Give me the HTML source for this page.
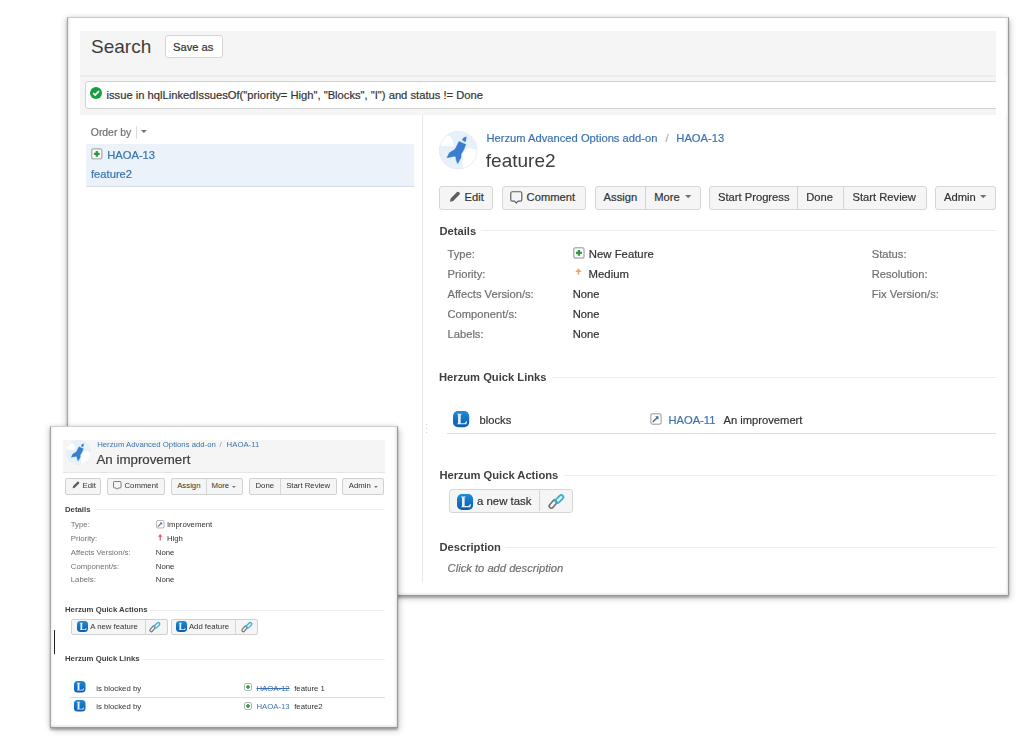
<!DOCTYPE html>
<html><head><meta charset="utf-8"><style>
html,body{margin:0;padding:0;background:#fff;}
body{width:1028px;height:742px;position:relative;overflow:hidden;font-family:"Liberation Sans",sans-serif;}
#w{position:absolute;left:0;top:0;width:1028px;height:742px;filter:blur(0.5px);}
.a{position:absolute;}
.t{position:absolute;white-space:nowrap;}
svg.a{overflow:visible;}
</style></head><body><div id="w">
<div class="a" style="left:67px;top:17px;width:940px;height:577px;background:#fff;border:1px solid #999;border-left-color:#a6a6a6;border-top-color:#c8c8c8;box-shadow:0 2px 2px rgba(0,0,0,0.22), 2px 3px 6px rgba(0,0,0,0.16), -2px 0 6px rgba(0,0,0,0.13), inset 3px 0 3px -2px rgba(0,0,0,0.10), inset -3px -3px 3px -2px rgba(0,0,0,0.12);"></div>
<div class="a" style="left:80.00px;top:31.00px;width:916.00px;height:84.00px;background:#f5f5f5;"></div>
<div class="a" style="left:80.00px;top:75.00px;width:916.00px;height:2.00px;background:#eeeeee;"></div>
<div class="a" style="left:85.00px;top:81.00px;width:915.00px;height:27.60px;background:#fff;border:1px solid #d2d2d2;border-radius:3px;box-sizing:border-box;"></div>
<div class="a" style="left:996.00px;top:76.00px;width:11.00px;height:39.00px;background:#fff;"></div>
<div class="t" style="left:91.00px;top:36.72px;font-size:19px;line-height:19px;color:#3d3d3d;font-weight:normal;font-style:normal;">Search</div>
<div class="a" style="left:164.50px;top:35.30px;width:58.00px;height:23.10px;background:#fff;border:1px solid #d5d5d5;border-radius:3px;box-sizing:border-box;"></div>
<div class="t" style="left:173.00px;top:41.92px;font-size:11.2px;line-height:11.2px;color:#333333;font-weight:normal;font-style:normal;-webkit-text-stroke:0.2px currentColor;">Save as</div>
<svg class="a" style="left:90.20px;top:86.80px" width="12" height="12" viewBox="0 0 12 12"><circle cx="6" cy="6" r="6" fill="#14a03c"/><path d="M3.2 6.2L5.2 8.1L8.9 4.2" fill="none" stroke="#fff" stroke-width="1.8"/></svg>
<div class="t" style="left:106.50px;top:90.32px;font-size:11.2px;line-height:11.2px;color:#333333;font-weight:normal;font-style:normal;-webkit-text-stroke:0.2px currentColor;">issue in hqlLinkedIssuesOf("priority= High", "Blocks", "I") and status != Done</div>
<div class="a" style="left:421.80px;top:115.00px;width:1.00px;height:468.00px;background:#e9e9e9;"></div>
<div class="t" style="left:90.80px;top:128.10px;font-size:10.4px;line-height:10.4px;color:#707070;font-weight:normal;font-style:normal;-webkit-text-stroke:0.2px currentColor;">Order by</div>
<div class="a" style="left:136.30px;top:126.00px;width:1.00px;height:13.00px;background:#dcdcdc;"></div>
<svg class="a" style="left:140.90px;top:130.15px" width="5.8" height="2.9" viewBox="0 0 5.8 2.9"><path d="M0 0H5.8L2.9 2.9Z" fill="#707070"/></svg>
<div class="a" style="left:86.40px;top:143.50px;width:327.60px;height:43.00px;background:#ebf2f9;border-bottom:1px solid #d8dde3;box-sizing:border-box;"></div>
<svg class="a" style="left:91.20px;top:148.00px" width="11.6" height="11.6" viewBox="0 0 11.6 11.6"><rect x="0.725" y="0.725" width="10.15" height="10.15" rx="2.126666666666667" fill="#fff" stroke="#b5b5b5" stroke-width="1.45"/><path d="M5.8 2.9V8.7M2.9 5.8H8.7" stroke="#2c9a43" stroke-width="2.32"/></svg>
<div class="t" style="left:107.20px;top:149.52px;font-size:11.2px;line-height:11.2px;color:#3b73af;font-weight:normal;font-style:normal;-webkit-text-stroke:0.2px currentColor;">HAOA-13</div>
<div class="t" style="left:91.00px;top:169.12px;font-size:11.2px;line-height:11.2px;color:#3b73af;font-weight:normal;font-style:normal;-webkit-text-stroke:0.2px currentColor;">feature2</div>
<svg class="a" style="left:439.00px;top:130.50px" width="38.6" height="38.6" viewBox="0 0 38.6 38.6"><defs><clipPath id="cl18"><circle cx="19.3" cy="19.3" r="19.3"/></clipPath></defs><g clip-path="url(#cl18)"><rect width="38.6" height="38.6" fill="#e8f0fa"/><path d="M-0.9650000000000001 15.054H14.475000000000001Q15.054 8.685 10.615 5.3075Q6.755000000000001 2.8950000000000005 1.9300000000000002 5.790000000000001L-0.9650000000000001 8.685Z" fill="#ffffff"/><path d="M23.642500000000002 39.565000000000005V25.090000000000003Q23.642500000000002 17.37 30.880000000000003 17.2735Q35.705000000000005 17.37 39.565000000000005 20.265V39.565000000000005Z" fill="#ffffff"/><circle cx="19.3" cy="19.3" r="18.817500000000003" fill="none" stroke="#e6ebf1" stroke-width="0.9650000000000001"/><polygon points="22.97,9.07 24.61,6.47 27.60,5.50 27.21,8.59 26.44,11.19" fill="#3a7fcf"/><polygon points="20.07,10.42 26.73,13.51 24.61,18.91 22.00,23.16 22.00,26.54 18.72,32.62 17.27,29.34 16.79,25.57 14.96,25.28 8.11,26.73 10.42,21.81 13.03,20.17 16.12,18.24" fill="#3a7fcf" stroke="#3a7fcf" stroke-width="0.5790000000000001" stroke-linejoin="round"/></g></svg>
<div class="t" style="left:486.40px;top:133.22px;font-size:11.2px;line-height:11.2px;color:#3b73af;font-weight:normal;font-style:normal;-webkit-text-stroke:0.2px currentColor;">Herzum Advanced Options add-on</div>
<div class="t" style="left:665.50px;top:133.22px;font-size:11.2px;line-height:11.2px;color:#aaa;font-weight:normal;font-style:normal;-webkit-text-stroke:0.2px currentColor;">/</div>
<div class="t" style="left:676.30px;top:133.22px;font-size:11.2px;line-height:11.2px;color:#3b73af;font-weight:normal;font-style:normal;-webkit-text-stroke:0.2px currentColor;">HAOA-13</div>
<div class="t" style="left:485.80px;top:150.62px;font-size:19px;line-height:19px;color:#3d3d3d;font-weight:normal;font-style:normal;">feature2</div>
<div class="a" style="left:439.30px;top:186.00px;width:53.30px;height:24.20px;background:#f5f5f5;border:1px solid #d6d6d6;border-radius:3px;box-sizing:border-box;"></div>
<svg class="a" style="left:448.80px;top:190.80px" width="11.6" height="11.6" viewBox="0 0 11.6 11.6"><path d="M0.87 10.73L1.6433333333333333 7.443333333333333L8.023333333333333 1.0633333333333335Q8.893333333333333 0.19333333333333336 9.763333333333334 1.0633333333333335L10.536666666666667 1.8366666666666667Q11.406666666666668 2.7066666666666666 10.536666666666667 3.5766666666666667L4.156666666666666 9.956666666666667Z" fill="#5e5e5e"/></svg>
<div class="t" style="left:464.60px;top:192.12px;font-size:11.2px;line-height:11.2px;color:#333333;font-weight:normal;font-style:normal;-webkit-text-stroke:0.2px currentColor;">Edit</div>
<div class="a" style="left:501.50px;top:186.00px;width:84.20px;height:24.20px;background:#f5f5f5;border:1px solid #d6d6d6;border-radius:3px;box-sizing:border-box;"></div>
<svg class="a" style="left:510.20px;top:190.50px" width="12.6" height="12.6" viewBox="0 0 12.6 12.6"><path d="M2.229230769230769 0.7753846153846154H10.37076923076923Q11.824615384615385 0.7753846153846154 11.824615384615385 2.229230769230769V8.723076923076922Q11.824615384615385 10.176923076923076 10.37076923076923 10.176923076923076H8.044615384615385L6.3 12.115384615384615L4.555384615384615 10.176923076923076H2.229230769230769Q0.7753846153846154 10.176923076923076 0.7753846153846154 8.723076923076922V2.229230769230769Q0.7753846153846154 0.7753846153846154 2.229230769230769 0.7753846153846154Z" fill="none" stroke="#5e5e5e" stroke-width="1.1630769230769231" stroke-linejoin="round"/></svg>
<div class="t" style="left:526.60px;top:192.12px;font-size:11.2px;line-height:11.2px;color:#333333;font-weight:normal;font-style:normal;-webkit-text-stroke:0.2px currentColor;">Comment</div>
<div class="a" style="left:594.50px;top:186.00px;width:106.00px;height:24.20px;background:#f5f5f5;border:1px solid #d6d6d6;border-radius:3px;box-sizing:border-box;"></div>
<div class="a" style="left:645.30px;top:187.00px;width:1.00px;height:22.20px;background:#d4d4d4;"></div>
<div class="t" style="left:603.60px;top:192.12px;font-size:11.2px;line-height:11.2px;color:#333333;font-weight:normal;font-style:normal;-webkit-text-stroke:0.2px currentColor;">Assign</div>
<div class="t" style="left:654.20px;top:192.12px;font-size:11.2px;line-height:11.2px;color:#333333;font-weight:normal;font-style:normal;-webkit-text-stroke:0.2px currentColor;">More</div>
<svg class="a" style="left:684.80px;top:195.00px" width="6.4" height="3.2" viewBox="0 0 6.4 3.2"><path d="M0 0H6.4L3.2 3.2Z" fill="#707070"/></svg>
<div class="a" style="left:708.50px;top:186.00px;width:218.00px;height:24.20px;background:#f5f5f5;border:1px solid #d6d6d6;border-radius:3px;box-sizing:border-box;"></div>
<div class="a" style="left:796.80px;top:187.00px;width:1.00px;height:22.20px;background:#d4d4d4;"></div>
<div class="a" style="left:843.30px;top:187.00px;width:1.00px;height:22.20px;background:#d4d4d4;"></div>
<div class="t" style="left:718.00px;top:192.12px;font-size:11.2px;line-height:11.2px;color:#333333;font-weight:normal;font-style:normal;-webkit-text-stroke:0.2px currentColor;">Start Progress</div>
<div class="t" style="left:806.20px;top:192.12px;font-size:11.2px;line-height:11.2px;color:#333333;font-weight:normal;font-style:normal;-webkit-text-stroke:0.2px currentColor;">Done</div>
<div class="t" style="left:852.50px;top:192.12px;font-size:11.2px;line-height:11.2px;color:#333333;font-weight:normal;font-style:normal;-webkit-text-stroke:0.2px currentColor;">Start Review</div>
<div class="a" style="left:934.50px;top:186.00px;width:61.00px;height:24.20px;background:#f5f5f5;border:1px solid #d6d6d6;border-radius:3px;box-sizing:border-box;"></div>
<div class="t" style="left:944.10px;top:192.12px;font-size:11.2px;line-height:11.2px;color:#333333;font-weight:normal;font-style:normal;-webkit-text-stroke:0.2px currentColor;">Admin</div>
<svg class="a" style="left:980.40px;top:195.00px" width="6.4" height="3.2" viewBox="0 0 6.4 3.2"><path d="M0 0H6.4L3.2 3.2Z" fill="#707070"/></svg>
<div class="t" style="left:439.50px;top:226.02px;font-size:11.2px;line-height:11.2px;color:#3f3f3f;font-weight:bold;font-style:normal;">Details</div>
<div class="a" style="left:481.00px;top:230.00px;width:515.60px;height:1.00px;background:#eeeeee;"></div>
<div class="t" style="left:447.50px;top:249.22px;font-size:11.2px;line-height:11.2px;color:#707070;font-weight:normal;font-style:normal;-webkit-text-stroke:0.2px currentColor;">Type:</div>
<div class="t" style="left:447.50px;top:268.82px;font-size:11.2px;line-height:11.2px;color:#707070;font-weight:normal;font-style:normal;-webkit-text-stroke:0.2px currentColor;">Priority:</div>
<div class="t" style="left:447.50px;top:288.82px;font-size:11.2px;line-height:11.2px;color:#707070;font-weight:normal;font-style:normal;-webkit-text-stroke:0.2px currentColor;">Affects Version/s:</div>
<div class="t" style="left:447.50px;top:308.92px;font-size:11.2px;line-height:11.2px;color:#707070;font-weight:normal;font-style:normal;-webkit-text-stroke:0.2px currentColor;">Component/s:</div>
<div class="t" style="left:447.50px;top:329.22px;font-size:11.2px;line-height:11.2px;color:#707070;font-weight:normal;font-style:normal;-webkit-text-stroke:0.2px currentColor;">Labels:</div>
<div class="t" style="left:871.70px;top:249.22px;font-size:11.2px;line-height:11.2px;color:#707070;font-weight:normal;font-style:normal;-webkit-text-stroke:0.2px currentColor;">Status:</div>
<div class="t" style="left:871.70px;top:268.82px;font-size:11.2px;line-height:11.2px;color:#707070;font-weight:normal;font-style:normal;-webkit-text-stroke:0.2px currentColor;">Resolution:</div>
<div class="t" style="left:871.70px;top:288.82px;font-size:11.2px;line-height:11.2px;color:#707070;font-weight:normal;font-style:normal;-webkit-text-stroke:0.2px currentColor;">Fix Version/s:</div>
<svg class="a" style="left:572.90px;top:247.40px" width="11.8" height="11.8" viewBox="0 0 11.8 11.8"><rect x="0.7375" y="0.7375" width="10.325000000000001" height="10.325000000000001" rx="2.1633333333333336" fill="#fff" stroke="#b5b5b5" stroke-width="1.475"/><path d="M5.9 2.95V8.850000000000001M2.95 5.9H8.850000000000001" stroke="#2c9a43" stroke-width="2.36"/></svg>
<div class="t" style="left:588.80px;top:249.09px;font-size:11.35px;line-height:11.35px;color:#333333;font-weight:normal;font-style:normal;-webkit-text-stroke:0.2px currentColor;">New Feature</div>
<svg class="a" style="left:575.00px;top:267.80px" width="7" height="7" viewBox="0 0 7 7"><path d="M3.5 0.4L6.8 4H4.3V6.5H2.7V4H0.2Z" fill="#f8a15a"/></svg>
<div class="t" style="left:588.60px;top:268.69px;font-size:11.35px;line-height:11.35px;color:#333333;font-weight:normal;font-style:normal;-webkit-text-stroke:0.2px currentColor;">Medium</div>
<div class="t" style="left:572.70px;top:288.82px;font-size:11.2px;line-height:11.2px;color:#333333;font-weight:normal;font-style:normal;-webkit-text-stroke:0.2px currentColor;">None</div>
<div class="t" style="left:572.70px;top:308.92px;font-size:11.2px;line-height:11.2px;color:#333333;font-weight:normal;font-style:normal;-webkit-text-stroke:0.2px currentColor;">None</div>
<div class="t" style="left:572.70px;top:329.22px;font-size:11.2px;line-height:11.2px;color:#333333;font-weight:normal;font-style:normal;-webkit-text-stroke:0.2px currentColor;">None</div>
<div class="t" style="left:439.00px;top:372.32px;font-size:11.2px;line-height:11.2px;color:#3f3f3f;font-weight:bold;font-style:normal;">Herzum Quick Links</div>
<div class="a" style="left:551.70px;top:376.50px;width:444.90px;height:1.00px;background:#eeeeee;"></div>
<svg class="a" style="left:452.80px;top:410.80px" width="16.2" height="16.2" viewBox="0 0 16.2 16.2"><defs><linearGradient id="g62" x1="0" y1="0" x2="0" y2="1"><stop offset="0" stop-color="#1e8ad6"/><stop offset="1" stop-color="#0a5cb0"/></linearGradient></defs><rect x="0" y="0" width="16.2" height="16.2" rx="5.0625" fill="url(#g62)"/><path d="M4.05 2.6325H8.7075V3.24L7.694999999999999 3.645V12.149999999999999H11.643749999999999L13.364999999999998 10.125H13.9725L13.46625 13.364999999999998H4.05V12.757499999999999L5.0625 12.3525V3.645L4.05 3.24Z" fill="#e8eef5"/></svg>
<div class="t" style="left:479.60px;top:414.52px;font-size:11.2px;line-height:11.2px;color:#333333;font-weight:normal;font-style:normal;-webkit-text-stroke:0.2px currentColor;">blocks</div>
<svg class="a" style="left:649.60px;top:412.50px" width="11.9" height="11.9" viewBox="0 0 11.9 11.9"><rect x="0.74375" y="0.74375" width="10.4125" height="10.4125" rx="2.181666666666667" fill="#fff" stroke="#b9b9b9" stroke-width="1.4875"/><path d="M3.2725 8.528333333333332L7.140000000000001 4.76" stroke="#4d6b8f" stroke-width="1.586666666666667" stroke-linecap="round"/><path d="M5.156666666666667 3.3716666666666666H8.528333333333332V6.743333333333333Z" fill="#4d6b8f"/></svg>
<div class="t" style="left:668.40px;top:414.52px;font-size:11.2px;line-height:11.2px;color:#3b73af;font-weight:normal;font-style:normal;-webkit-text-stroke:0.2px currentColor;">HAOA-11</div>
<div class="t" style="left:723.50px;top:414.52px;font-size:11.2px;line-height:11.2px;color:#333333;font-weight:normal;font-style:normal;-webkit-text-stroke:0.2px currentColor;">An improvemert</div>
<div class="a" style="left:447.30px;top:433.00px;width:548.30px;height:1.20px;background:#dcdcdc;"></div>
<div class="a" style="left:426.00px;top:424.00px;width:1.00px;height:1.00px;background:#d0d0d0;"></div>
<div class="a" style="left:426.00px;top:428.00px;width:1.00px;height:1.00px;background:#d0d0d0;"></div>
<div class="a" style="left:426.00px;top:432.00px;width:1.00px;height:1.00px;background:#d0d0d0;"></div>
<div class="t" style="left:439.40px;top:470.12px;font-size:11.2px;line-height:11.2px;color:#3f3f3f;font-weight:bold;font-style:normal;">Herzum Quick Actions</div>
<div class="a" style="left:563.70px;top:475.00px;width:432.90px;height:1.00px;background:#eeeeee;"></div>
<div class="a" style="left:449.20px;top:489.40px;width:124.00px;height:23.20px;background:#f5f5f5;border:1px solid #d6d6d6;border-radius:3px;box-sizing:border-box;"></div>
<div class="a" style="left:539.20px;top:490.40px;width:1.00px;height:20.80px;background:#d4d4d4;"></div>
<svg class="a" style="left:457.10px;top:493.50px" width="16.1" height="16.1" viewBox="0 0 16.1 16.1"><defs><linearGradient id="g75" x1="0" y1="0" x2="0" y2="1"><stop offset="0" stop-color="#1e8ad6"/><stop offset="1" stop-color="#0a5cb0"/></linearGradient></defs><rect x="0" y="0" width="16.1" height="16.1" rx="5.03125" fill="url(#g75)"/><path d="M4.025 2.6162500000000004H8.65375V3.2200000000000006L7.6475 3.6225000000000005V12.075000000000001H11.571875L13.2825 10.0625H13.886250000000002L13.383125000000001 13.2825H4.025V12.67875L5.03125 12.276250000000001V3.6225000000000005L4.025 3.2200000000000006Z" fill="#e8eef5"/></svg>
<div class="t" style="left:477.00px;top:495.55px;font-size:11.4px;line-height:11.4px;color:#333333;font-weight:normal;font-style:normal;-webkit-text-stroke:0.2px currentColor;">a new task</div>
<svg class="a" style="left:547.50px;top:493.20px" width="17" height="17" viewBox="0 0 17 17"><rect x="0.32" y="9.08" width="9.35" height="4.14" rx="2.07" transform="rotate(-50 4.99 11.16)" fill="none" stroke="#6f6f6f" stroke-width="1.59"/><rect x="6.69" y="3.98" width="9.35" height="4.14" rx="2.07" transform="rotate(-45 11.37 6.06)" fill="none" stroke="#3cb2d8" stroke-width="1.91"/></svg>
<div class="t" style="left:439.40px;top:542.32px;font-size:11.2px;line-height:11.2px;color:#3f3f3f;font-weight:bold;font-style:normal;">Description</div>
<div class="a" style="left:505.20px;top:546.50px;width:491.40px;height:1.00px;background:#eeeeee;"></div>
<div class="t" style="left:447.60px;top:562.92px;font-size:11.2px;line-height:11.2px;color:#707070;font-weight:normal;font-style:italic;-webkit-text-stroke:0.2px currentColor;">Click to add description</div>
<div class="a" style="left:50px;top:426px;width:346px;height:300px;background:#fff;border:1px solid #999;border-left-color:#a6a6a6;border-top-color:#cfcfcf;box-shadow:0 2px 2px rgba(0,0,0,0.25), 2px 3px 6px rgba(0,0,0,0.18), -2px 0 5px rgba(0,0,0,0.12), inset 3px 0 3px -2px rgba(0,0,0,0.08), inset -3px -3px 3px -2px rgba(0,0,0,0.12);"></div>
<div class="a" style="left:63.30px;top:440.00px;width:321.30px;height:32.60px;background:#f5f5f5;border-bottom:1px solid #e6e6e6;box-sizing:border-box;"></div>
<svg class="a" style="left:65.70px;top:439.90px" width="25" height="25" viewBox="0 0 25 25"><defs><clipPath id="cl83"><circle cx="12.5" cy="12.5" r="12.5"/></clipPath></defs><g clip-path="url(#cl83)"><rect width="25.0" height="25.0" fill="#e8f0fa"/><path d="M-0.625 9.75H9.375Q9.75 5.625 6.875 3.4375Q4.375 1.875 1.25 3.75L-0.625 5.625Z" fill="#ffffff"/><path d="M15.3125 25.625V16.25Q15.3125 11.25 20.0 11.1875Q23.125 11.25 25.625 13.125V25.625Z" fill="#ffffff"/><circle cx="12.5" cy="12.5" r="12.1875" fill="none" stroke="#e6ebf1" stroke-width="0.625"/><polygon points="14.88,5.88 15.94,4.19 17.88,3.56 17.62,5.56 17.12,7.25" fill="#3a7fcf"/><polygon points="13.00,6.75 17.31,8.75 15.94,12.25 14.25,15.00 14.25,17.19 12.12,21.12 11.19,19.00 10.88,16.56 9.69,16.38 5.25,17.31 6.75,14.12 8.44,13.06 10.44,11.81" fill="#3a7fcf" stroke="#3a7fcf" stroke-width="0.375" stroke-linejoin="round"/></g></svg>
<div class="t" style="left:97.20px;top:441.32px;font-size:7.77px;line-height:7.77px;color:#3b73af;font-weight:normal;font-style:normal;">Herzum Advanced Options add-on</div>
<div class="t" style="left:219.50px;top:441.32px;font-size:7.77px;line-height:7.77px;color:#999;font-weight:normal;font-style:normal;">/</div>
<div class="t" style="left:226.60px;top:441.32px;font-size:7.77px;line-height:7.77px;color:#3b73af;font-weight:normal;font-style:normal;">HAOA-11</div>
<div class="t" style="left:96.50px;top:453.44px;font-size:13.3px;line-height:13.3px;color:#3d3d3d;font-weight:normal;font-style:normal;-webkit-text-stroke:0.2px currentColor;">An improvemert</div>
<div class="a" style="left:64.90px;top:478.10px;width:36.60px;height:16.50px;background:#f5f5f5;border:1px solid #d0d0d0;border-radius:2px;box-sizing:border-box;"></div>
<svg class="a" style="left:72.00px;top:481.40px" width="7.8" height="7.8" viewBox="0 0 7.8 7.8"><path d="M0.5850000000000001 7.215L1.105 5.005L5.3950000000000005 0.7150000000000001Q5.9799999999999995 0.13 6.565 0.7150000000000001L7.085000000000001 1.2349999999999999Q7.670000000000001 1.8199999999999998 7.085000000000001 2.4050000000000002L2.795 6.695Z" fill="#5e5e5e"/></svg>
<div class="t" style="left:82.50px;top:482.42px;font-size:7.77px;line-height:7.77px;color:#333333;font-weight:normal;font-style:normal;">Edit</div>
<div class="a" style="left:107.20px;top:478.10px;width:58.00px;height:16.50px;background:#f5f5f5;border:1px solid #d0d0d0;border-radius:2px;box-sizing:border-box;"></div>
<svg class="a" style="left:113.20px;top:481.20px" width="8.6" height="8.6" viewBox="0 0 8.6 8.6"><path d="M1.5215384615384613 0.5292307692307693H7.0784615384615375Q8.07076923076923 0.5292307692307693 8.07076923076923 1.5215384615384613V5.953846153846154Q8.07076923076923 6.946153846153846 7.0784615384615375 6.946153846153846H5.4907692307692315L4.3 8.269230769230768L3.1092307692307695 6.946153846153846H1.5215384615384613Q0.5292307692307693 6.946153846153846 0.5292307692307693 5.953846153846154V1.5215384615384613Q0.5292307692307693 0.5292307692307693 1.5215384615384613 0.5292307692307693Z" fill="none" stroke="#5e5e5e" stroke-width="0.7938461538461538" stroke-linejoin="round"/></svg>
<div class="t" style="left:124.50px;top:482.42px;font-size:7.77px;line-height:7.77px;color:#333333;font-weight:normal;font-style:normal;">Comment</div>
<div class="a" style="left:170.50px;top:478.10px;width:72.90px;height:16.50px;background:#f5f5f5;border:1px solid #d0d0d0;border-radius:2px;box-sizing:border-box;"></div>
<div class="a" style="left:205.50px;top:479.10px;width:0.80px;height:14.50px;background:#d6d6d6;"></div>
<div class="t" style="left:177.20px;top:482.42px;font-size:7.77px;line-height:7.77px;color:#333333;font-weight:normal;font-style:normal;">Assign</div>
<div class="t" style="left:211.50px;top:482.42px;font-size:7.77px;line-height:7.77px;color:#333333;font-weight:normal;font-style:normal;">More</div>
<svg class="a" style="left:232.10px;top:485.55px" width="3.8" height="1.9" viewBox="0 0 3.8 1.9"><path d="M0 0H3.8L1.9 1.9Z" fill="#777"/></svg>
<div class="a" style="left:248.70px;top:478.10px;width:88.00px;height:16.50px;background:#f5f5f5;border:1px solid #d0d0d0;border-radius:2px;box-sizing:border-box;"></div>
<div class="a" style="left:279.80px;top:479.10px;width:0.80px;height:14.50px;background:#d6d6d6;"></div>
<div class="t" style="left:255.50px;top:482.42px;font-size:7.77px;line-height:7.77px;color:#333333;font-weight:normal;font-style:normal;">Done</div>
<div class="t" style="left:286.20px;top:482.42px;font-size:7.77px;line-height:7.77px;color:#333333;font-weight:normal;font-style:normal;">Start Review</div>
<div class="a" style="left:342.10px;top:478.10px;width:41.60px;height:16.50px;background:#f5f5f5;border:1px solid #d0d0d0;border-radius:2px;box-sizing:border-box;"></div>
<div class="t" style="left:348.80px;top:482.42px;font-size:7.77px;line-height:7.77px;color:#333333;font-weight:normal;font-style:normal;">Admin</div>
<svg class="a" style="left:373.60px;top:485.55px" width="3.8" height="1.9" viewBox="0 0 3.8 1.9"><path d="M0 0H3.8L1.9 1.9Z" fill="#777"/></svg>
<div class="t" style="left:65.00px;top:506.32px;font-size:7.77px;line-height:7.77px;color:#3f3f3f;font-weight:bold;font-style:normal;">Details</div>
<div class="a" style="left:94.40px;top:509.30px;width:290.20px;height:0.80px;background:#eeeeee;"></div>
<div class="t" style="left:70.80px;top:521.22px;font-size:7.77px;line-height:7.77px;color:#707070;font-weight:normal;font-style:normal;">Type:</div>
<div class="t" style="left:70.80px;top:534.92px;font-size:7.77px;line-height:7.77px;color:#707070;font-weight:normal;font-style:normal;">Priority:</div>
<div class="t" style="left:70.80px;top:549.02px;font-size:7.77px;line-height:7.77px;color:#707070;font-weight:normal;font-style:normal;">Affects Version/s:</div>
<div class="t" style="left:70.80px;top:562.72px;font-size:7.77px;line-height:7.77px;color:#707070;font-weight:normal;font-style:normal;">Component/s:</div>
<div class="t" style="left:70.80px;top:576.42px;font-size:7.77px;line-height:7.77px;color:#707070;font-weight:normal;font-style:normal;">Labels:</div>
<svg class="a" style="left:155.80px;top:519.60px" width="8.6" height="8.6" viewBox="0 0 8.6 8.6"><rect x="0.5375" y="0.5375" width="7.525" height="7.525" rx="1.5766666666666669" fill="#fff" stroke="#b9b9b9" stroke-width="1.075"/><path d="M2.3649999999999998 6.163333333333333L5.16 3.44" stroke="#4d6b8f" stroke-width="1.1466666666666667" stroke-linecap="round"/><path d="M3.726666666666667 2.4366666666666665H6.163333333333333V4.873333333333333Z" fill="#4d6b8f"/></svg>
<div class="t" style="left:166.90px;top:521.22px;font-size:7.77px;line-height:7.77px;color:#333333;font-weight:normal;font-style:normal;">Improvement</div>
<svg class="a" style="left:157.80px;top:534.20px" width="4.4" height="6.4" viewBox="0 0 4.4 6.4"><path d="M2.2 0L4.4 2.8H2.8V6.4H1.6V2.8H0Z" fill="#e2566b"/></svg>
<div class="t" style="left:166.90px;top:534.92px;font-size:7.77px;line-height:7.77px;color:#333333;font-weight:normal;font-style:normal;">High</div>
<div class="t" style="left:155.80px;top:549.02px;font-size:7.77px;line-height:7.77px;color:#333333;font-weight:normal;font-style:normal;">None</div>
<div class="t" style="left:155.80px;top:562.72px;font-size:7.77px;line-height:7.77px;color:#333333;font-weight:normal;font-style:normal;">None</div>
<div class="t" style="left:155.80px;top:576.42px;font-size:7.77px;line-height:7.77px;color:#333333;font-weight:normal;font-style:normal;">None</div>
<div class="t" style="left:65.00px;top:606.42px;font-size:7.77px;line-height:7.77px;color:#3f3f3f;font-weight:bold;font-style:normal;">Herzum Quick Actions</div>
<div class="a" style="left:149.60px;top:609.60px;width:235.00px;height:0.80px;background:#eeeeee;"></div>
<div class="a" style="left:71.40px;top:618.80px;width:96.30px;height:16.30px;background:#f5f5f5;border:1px solid #d0d0d0;border-radius:2px;box-sizing:border-box;"></div>
<div class="a" style="left:144.50px;top:619.80px;width:0.80px;height:14.30px;background:#d6d6d6;"></div>
<svg class="a" style="left:77.20px;top:621.30px" width="11" height="11" viewBox="0 0 11 11"><defs><linearGradient id="g124" x1="0" y1="0" x2="0" y2="1"><stop offset="0" stop-color="#1e8ad6"/><stop offset="1" stop-color="#0a5cb0"/></linearGradient></defs><rect x="0" y="0" width="11.0" height="11.0" rx="3.4375" fill="url(#g124)"/><path d="M2.75 1.7875H5.9125V2.2L5.225 2.475V8.25H7.90625L9.075 6.875H9.4875L9.14375 9.075H2.75V8.6625L3.4375 8.3875V2.475L2.75 2.2Z" fill="#e8eef5"/></svg>
<div class="t" style="left:90.30px;top:623.32px;font-size:7.77px;line-height:7.77px;color:#333333;font-weight:normal;font-style:normal;">A new feature</div>
<svg class="a" style="left:149.30px;top:620.80px" width="12" height="12" viewBox="0 0 12 12"><rect x="0.22" y="6.41" width="6.60" height="2.92" rx="1.46" transform="rotate(-50 3.53 7.88)" fill="none" stroke="#6f6f6f" stroke-width="1.12"/><rect x="4.72" y="2.81" width="6.60" height="2.92" rx="1.46" transform="rotate(-45 8.02 4.28)" fill="none" stroke="#3cb2d8" stroke-width="1.35"/></svg>
<div class="a" style="left:170.50px;top:618.80px;width:87.10px;height:16.30px;background:#f5f5f5;border:1px solid #d0d0d0;border-radius:2px;box-sizing:border-box;"></div>
<div class="a" style="left:235.00px;top:619.80px;width:0.80px;height:14.30px;background:#d6d6d6;"></div>
<svg class="a" style="left:176.10px;top:621.30px" width="11" height="11" viewBox="0 0 11 11"><defs><linearGradient id="g129" x1="0" y1="0" x2="0" y2="1"><stop offset="0" stop-color="#1e8ad6"/><stop offset="1" stop-color="#0a5cb0"/></linearGradient></defs><rect x="0" y="0" width="11.0" height="11.0" rx="3.4375" fill="url(#g129)"/><path d="M2.75 1.7875H5.9125V2.2L5.225 2.475V8.25H7.90625L9.075 6.875H9.4875L9.14375 9.075H2.75V8.6625L3.4375 8.3875V2.475L2.75 2.2Z" fill="#e8eef5"/></svg>
<div class="t" style="left:188.90px;top:623.32px;font-size:7.77px;line-height:7.77px;color:#333333;font-weight:normal;font-style:normal;">Add feature</div>
<svg class="a" style="left:240.50px;top:620.80px" width="12" height="12" viewBox="0 0 12 12"><rect x="0.22" y="6.41" width="6.60" height="2.92" rx="1.46" transform="rotate(-50 3.53 7.88)" fill="none" stroke="#6f6f6f" stroke-width="1.12"/><rect x="4.72" y="2.81" width="6.60" height="2.92" rx="1.46" transform="rotate(-45 8.02 4.28)" fill="none" stroke="#3cb2d8" stroke-width="1.35"/></svg>
<div class="a" style="left:53.90px;top:630.00px;width:1.10px;height:24.00px;background:#222;"></div>
<div class="t" style="left:65.00px;top:655.42px;font-size:7.77px;line-height:7.77px;color:#3f3f3f;font-weight:bold;font-style:normal;">Herzum Quick Links</div>
<div class="a" style="left:141.50px;top:658.60px;width:243.10px;height:0.80px;background:#eeeeee;"></div>
<svg class="a" style="left:74.10px;top:681.40px" width="11.5" height="11.5" viewBox="0 0 11.5 11.5"><defs><linearGradient id="g135" x1="0" y1="0" x2="0" y2="1"><stop offset="0" stop-color="#1e8ad6"/><stop offset="1" stop-color="#0a5cb0"/></linearGradient></defs><rect x="0" y="0" width="11.5" height="11.5" rx="3.59375" fill="url(#g135)"/><path d="M2.875 1.8687500000000001H6.1812499999999995V2.3000000000000003L5.4624999999999995 2.5875V8.625H8.265625L9.487499999999999 7.1875H9.918750000000001L9.559375000000001 9.487499999999999H2.875V9.05625L3.59375 8.768749999999999V2.5875L2.875 2.3000000000000003Z" fill="#e8eef5"/></svg>
<div class="t" style="left:96.20px;top:685.02px;font-size:7.77px;line-height:7.77px;color:#333333;font-weight:normal;font-style:normal;">is blocked by</div>
<svg class="a" style="left:244.00px;top:683.00px" width="8" height="8" viewBox="0 0 8 8"><rect x="0.5" y="0.5" width="7.0" height="7.0" rx="1.4666666666666668" fill="#fff" stroke="#b5b5b5" stroke-width="1.0"/><path d="M4.0 2.0V6.0M2.0 4.0H6.0" stroke="#2c9a43" stroke-width="1.5999999999999999"/></svg>
<div class="t" style="left:256.40px;top:685.02px;font-size:7.77px;line-height:7.77px;color:#3b73af;font-weight:normal;font-style:normal;text-decoration:line-through;">HAOA-12</div>
<div class="t" style="left:294.20px;top:685.02px;font-size:7.77px;line-height:7.77px;color:#333333;font-weight:normal;font-style:normal;">feature 1</div>
<svg class="a" style="left:74.10px;top:699.90px" width="11.5" height="11.5" viewBox="0 0 11.5 11.5"><defs><linearGradient id="g140" x1="0" y1="0" x2="0" y2="1"><stop offset="0" stop-color="#1e8ad6"/><stop offset="1" stop-color="#0a5cb0"/></linearGradient></defs><rect x="0" y="0" width="11.5" height="11.5" rx="3.59375" fill="url(#g140)"/><path d="M2.875 1.8687500000000001H6.1812499999999995V2.3000000000000003L5.4624999999999995 2.5875V8.625H8.265625L9.487499999999999 7.1875H9.918750000000001L9.559375000000001 9.487499999999999H2.875V9.05625L3.59375 8.768749999999999V2.5875L2.875 2.3000000000000003Z" fill="#e8eef5"/></svg>
<div class="t" style="left:96.20px;top:703.12px;font-size:7.77px;line-height:7.77px;color:#333333;font-weight:normal;font-style:normal;">is blocked by</div>
<svg class="a" style="left:244.00px;top:701.50px" width="8" height="8" viewBox="0 0 8 8"><rect x="0.5" y="0.5" width="7.0" height="7.0" rx="1.4666666666666668" fill="#fff" stroke="#b5b5b5" stroke-width="1.0"/><path d="M4.0 2.0V6.0M2.0 4.0H6.0" stroke="#2c9a43" stroke-width="1.5999999999999999"/></svg>
<div class="t" style="left:256.40px;top:703.12px;font-size:7.77px;line-height:7.77px;color:#3b73af;font-weight:normal;font-style:normal;">HAOA-13</div>
<div class="t" style="left:294.20px;top:703.12px;font-size:7.77px;line-height:7.77px;color:#333333;font-weight:normal;font-style:normal;">feature2</div>
<div class="a" style="left:70.40px;top:697.00px;width:314.60px;height:0.90px;background:#dddddd;"></div>
</div></body></html>
